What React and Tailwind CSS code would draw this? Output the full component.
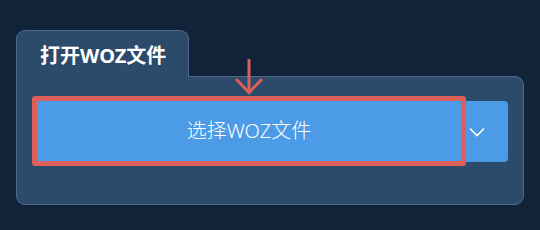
import React from 'react';

const App = () => {
  return (
    <div
      className="relative w-[540px] h-[230px] bg-[#112339] pt-[30px] pl-4"
      style={{ fontFamily: '"Noto Sans", "Noto Sans CJK SC", sans-serif' }}
    >
      {/* Tab */}
      <div className="relative z-10 -mb-px w-[173px] h-[47px] bg-[#2c4a6a] border border-b-0 border-[#4f6a8c] rounded-t-[9px] pl-[23px] pt-[12px]">
        <span className="text-white font-bold text-[20px] leading-[26px]">打开WOZ文件</span>
      </div>

      {/* Panel */}
      <div className="w-[508px] h-[129px] bg-[#2c4a6a] border border-[#4f6a8c] rounded-tr-[9px] rounded-b-[9px] pl-[15px] pt-[19px]">
        <div className="flex items-start">
          <div className="border-[5px] border-[#dd5f5a] rounded-[3px]">
            <div className="w-[424px] h-[60px] bg-[#4b9be6] flex items-center justify-center text-white font-light text-[20px]">
              选择WOZ文件
            </div>
          </div>
          <div className="mt-[5px] w-[42px] h-[61px] bg-[#4b9be6] rounded-r-[4px] flex items-center pl-[3px]">
            <svg width="16" height="10" viewBox="0 0 16 10" fill="none">
              <path d="M1 1.5 L8 8.5 L15 1.5" stroke="white" strokeWidth="1.6" />
            </svg>
          </div>
        </div>
      </div>

      {/* Pointer arrow */}
      <svg
        className="absolute left-[234px] top-[58px]"
        width="30"
        height="38"
        viewBox="0 0 30 38"
        fill="none"
      >
        <path d="M15 1 V35" stroke="#dd5f5a" strokeWidth="3" />
        <path d="M2 21 L15 34.5 L28 21" stroke="#dd5f5a" strokeWidth="3" />
      </svg>
    </div>
  );
};

export default App;
